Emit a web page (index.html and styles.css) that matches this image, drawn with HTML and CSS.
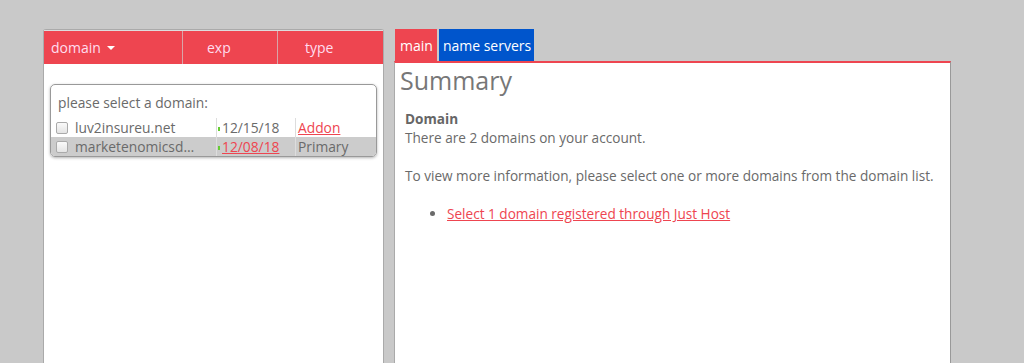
FILE: index.html
```html
<!DOCTYPE html>
<html lang="en">
<head>
    <meta charset="UTF-8">
    <title>Domains</title>
    <link rel="stylesheet" href="styles.css">
</head>
<body>
    <div class="page">
        <!-- Domain list -->
        <div class="list-panel">
            <div class="list-head">
                <div class="col col-domain">domain <span class="caret"></span></div>
                <div class="col col-exp">exp</div>
                <div class="col col-type">type</div>
            </div>
            <div class="list-body">
                <div class="select-box">
                    <div class="select-title">please select a domain:</div>
                    <div class="domain-row">
                        <div class="cell cell-name"><span class="check"></span>luv2insureu.net</div>
                        <div class="cell cell-exp"><span class="dot"></span>12/15/18</div>
                        <div class="cell cell-type"><a href="#">Addon</a></div>
                    </div>
                    <div class="domain-row selected">
                        <div class="cell cell-name"><span class="check"></span>marketenomicsd…</div>
                        <div class="cell cell-exp"><span class="dot"></span><a href="#">12/08/18</a></div>
                        <div class="cell cell-type">Primary</div>
                    </div>
                </div>
            </div>
        </div>

        <!-- Details -->
        <div class="detail-panel">
            <div class="tabs">
                <a class="tab active" href="#">main</a>
                <a class="tab blue" href="#">name servers</a>
            </div>
            <div class="detail-body">
                <h1>Summary</h1>
                <div class="section">
                    <strong>Domain</strong><br>
                    There are 2 domains on your account.<br><br>
                    To view more information, please select one or more domains from the domain list.
                    <ul>
                        <li><a href="#">Select 1 domain registered through Just Host</a></li>
                    </ul>
                </div>
            </div>
        </div>
    </div>
</body>
</html>
```

FILE: styles.css
```css
body, html {
    margin: 0;
    padding: 0;
    height: 100%;
    background-color: #c9c9c9;
    font-family: "Open Sans", Arial, sans-serif;
    color: #6a6a6a;
}
.page {
    display: flex;
    align-items: stretch;
    padding: 29px 0 0 43px;
    height: 334px;
    gap: 10px;
}
.list-panel {
    width: 339px;
    border: 1px solid #aaa;
    border-bottom: none;
    border-radius: 3px 3px 0 0;
    background: #fff;
    display: flex;
    flex-direction: column;
}
.list-head {
    display: flex;
    height: 33px;
    background: #ee4550;
    color: #fde;
    font-size: 14px;
    border-top: 1px solid #ddd;
}
.col {
    display: flex;
    align-items: center;
    border-right: 1px solid #d9a4a8;
}
.col-domain {
    width: 131px;
    padding-left: 7px;
}
.col-exp {
    width: 70px;
    padding-left: 24px;
}
.col-type {
    flex: 1;
    padding-left: 27px;
    border-right: none;
}
.caret {
    display: inline-block;
    margin-left: 6px;
    border-left: 4px solid transparent;
    border-right: 4px solid transparent;
    border-top: 4px solid #fff;
}
.list-body {
    flex: 1;
    padding: 20px 6px 0 6px;
}
.select-box {
    border: 1px solid #999;
    border-radius: 5px;
    box-shadow: 0 1px 3px rgba(0, 0, 0, 0.3);
    overflow: hidden;
    font-size: 13.8px;
}
.select-title {
    padding: 8px 7px 6px 7px;
}
.domain-row {
    display: flex;
    height: 19px;
    align-items: center;
}
.domain-row.selected {
    background: #ccc;
}
.cell {
    height: 100%;
    display: flex;
    align-items: center;
}
.cell-name {
    width: 160px;
    padding-left: 5px;
    border-right: 1px solid #ddd;
}
.check {
    display: inline-block;
    width: 10px;
    height: 10px;
    border: 1px solid #aaa;
    border-radius: 2px;
    background: linear-gradient(#fafafa, #e4e4e4);
    margin-right: 7px;
}
.cell-exp {
    width: 77px;
    padding-left: 1px;
    border-right: 1px solid #ddd;
}
.cell-type {
    padding-left: 2px;
}
.dot {
    display: inline-block;
    width: 2px;
    height: 4px;
    background: #6c3;
    margin-right: 2px;
    margin-top: 3px;
}
a {
    color: #ee4550;
}
.detail-panel {
    width: 557px;
    display: flex;
    flex-direction: column;
}
.tabs {
    display: flex;
    gap: 2px;
    height: 32px;
    padding-left: 1px;
}
.tab {
    display: flex;
    align-items: center;
    padding: 0 3px 0 4px;
    color: #fff;
    text-decoration: none;
    font-size: 14px;
    background: #ee4550;
}
.tab.active {
    padding: 0 4px 0 5px;
}
.tab.blue {
    background: #0055cc;
}
.detail-body {
    flex: 1;
    background: #fff;
    border-top: 2px solid #ee4550;
    border-left: 1px solid #aaa;
    border-right: 1px solid #999;
    padding: 0 10px;
}
h1 {
    margin: 0 0 0 -5px;
    font-size: 25px;
    font-weight: normal;
    color: #777;
}
.section {
    margin-top: 12px;
    font-size: 13.6px;
    line-height: 19px;
}
.section strong {
    color: #666;
}
ul {
    margin: 19px 0 0 0;
    padding-left: 42px;
}
```
